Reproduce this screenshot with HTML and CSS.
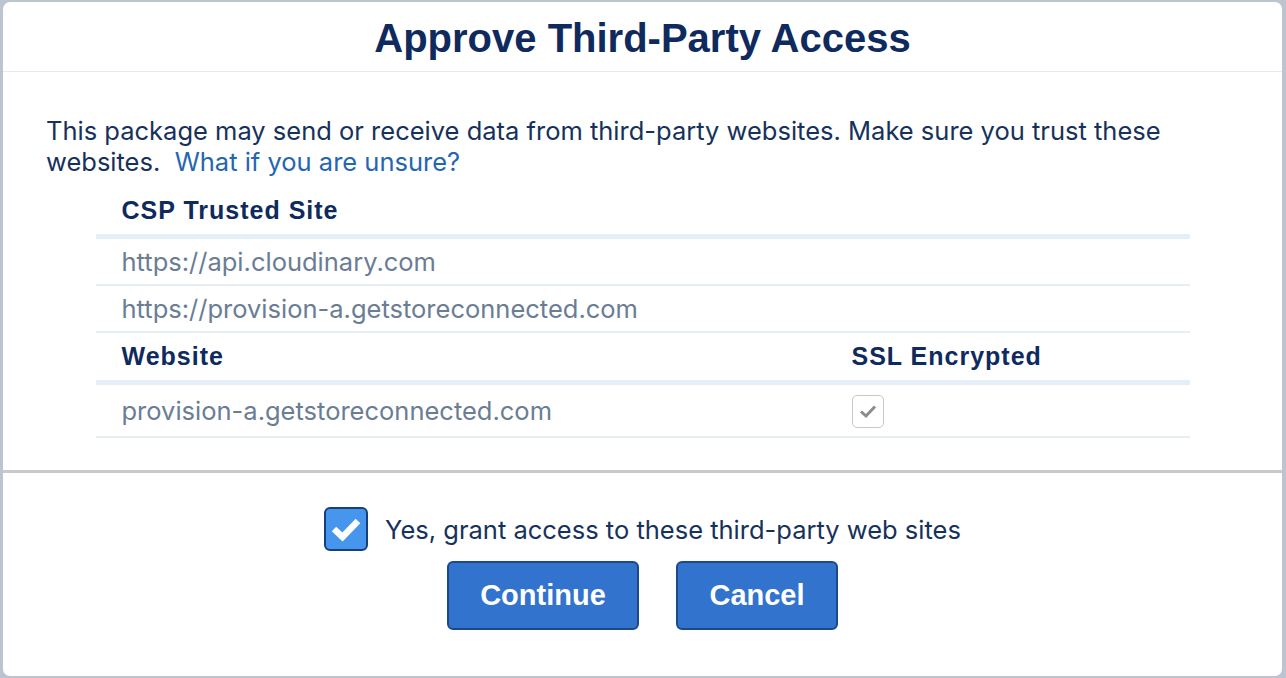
FILE: index.html
```html
<!DOCTYPE html>
<html>
<head>
<meta charset="utf-8">
<title>Approve Third-Party Access</title>
<link rel="stylesheet" href="styles.css">
</head>
<body>

  <div class="modal">
    <div class="modal-header">
      <h1>Approve Third-Party Access</h1>
    </div>

    <div class="modal-body">
      <p class="intro">This package may send or receive data from third-party websites. Make sure you trust these websites.&nbsp; <a href="#">What if you are unsure?</a></p>

      <table class="sites">
        <colgroup>
          <col class="col-site">
          <col>
        </colgroup>
        <tr class="head">
          <th colspan="2">CSP Trusted Site</th>
        </tr>
        <tr>
          <td colspan="2">https://api.cloudinary.com</td>
        </tr>
        <tr>
          <td colspan="2">https://provision-a.getstoreconnected.com</td>
        </tr>
        <tr class="head">
          <th>Website</th>
          <th>SSL Encrypted</th>
        </tr>
        <tr class="tall">
          <td>provision-a.getstoreconnected.com</td>
          <td>
            <span class="ssl-box">
              <svg width="20" height="16" viewBox="0 0 20 16"><path d="M3 8.5 L8 13 L17 3.5" fill="none" stroke="#8c8c8c" stroke-width="3"/></svg>
            </span>
          </td>
        </tr>
      </table>
    </div>

    <div class="modal-footer">
      <label class="grant">
        <span class="big-check">
          <svg width="32" height="26" viewBox="0 0 32 26"><path d="M4 13 L12.5 21 L28 5" fill="none" stroke="#fff" stroke-width="6.5"/></svg>
        </span>
        Yes, grant access to these third-party web sites
      </label>
      <div class="buttons">
        <button class="btn btn-continue">Continue</button>
        <button class="btn btn-cancel">Cancel</button>
      </div>
    </div>
  </div>

</body>
</html>
```

FILE: styles.css
```css
body {
    margin: 0;
    background-color: #bcc4d1;
    font-family: "Inter", "Liberation Sans", sans-serif;
    color: #16325c;
}

.modal {
    margin: 2px 4px 2px 3px;
    height: 674px;
    background: #fff;
    border-radius: 7px;
    display: flex;
    flex-direction: column;
}

/* header */
.modal-header {
    height: 70px;
    border-bottom: 1px solid #e1ecf7;
    display: flex;
    align-items: center;
    justify-content: center;
    padding-top: 3px;
    box-sizing: border-box;
}
.modal-header h1 {
    margin: 0;
    font-family: "Liberation Sans", Arial, sans-serif;
    font-weight: bold;
    font-size: 40px;
    color: #0f2a5d;
}

/* body */
.modal-body {
    padding: 43px 43px 32px 43px;
    border-bottom: 3px solid #c9c9c9;
}
.intro {
    margin: 0;
    font-size: 25.5px;
    line-height: 31px;
}
.intro a {
    color: #2566b0;
    text-decoration: none;
}

.sites {
    width: 1094px;
    margin: 10px auto 0 auto;
    border-collapse: collapse;
    table-layout: fixed;
}
.col-site {
    width: 730px;
}
.sites th,
.sites td {
    text-align: left;
    padding: 0 0 0 26px;
    white-space: nowrap;
}
.sites th {
    height: 47px;
    font-family: "Liberation Sans", Arial, sans-serif;
    font-weight: bold;
    font-size: 25px;
    letter-spacing: 1px;
    color: #0f2a5d;
}
.sites tr.head {
    border-bottom: 5px solid #e6eef7;
}
.sites td {
    height: 45px;
    font-size: 25.5px;
    color: #6a7d94;
    border-bottom: 2px solid #e6eef7;
}
.sites tr.tall td {
    height: 51px;
}

.ssl-box {
    display: inline-flex;
    align-items: center;
    justify-content: center;
    width: 30px;
    height: 31px;
    border: 1px solid #c8c8c8;
    border-radius: 5px;
    vertical-align: middle;
}

/* footer */
.modal-footer {
    flex: 1;
    display: flex;
    flex-direction: column;
    align-items: center;
    padding-top: 34px;
}
.grant {
    display: flex;
    align-items: center;
    gap: 17px;
    font-size: 25.5px;
    color: #16325c;
}
.big-check {
    width: 40px;
    height: 40px;
    background: #4796ee;
    border: 2px solid #17407a;
    border-radius: 6px;
    display: flex;
    align-items: center;
    justify-content: center;
}

.buttons {
    display: flex;
    gap: 37px;
    margin-top: 10px;
}
.btn {
    height: 69px;
    background: #3273cd;
    border: 2px solid #1c4a88;
    border-radius: 6px;
    color: #fff;
    font-family: "Liberation Sans", Arial, sans-serif;
    font-weight: bold;
    font-size: 29px;
}
.btn-continue {
    width: 192px;
}
.btn-cancel {
    width: 162px;
}
```
